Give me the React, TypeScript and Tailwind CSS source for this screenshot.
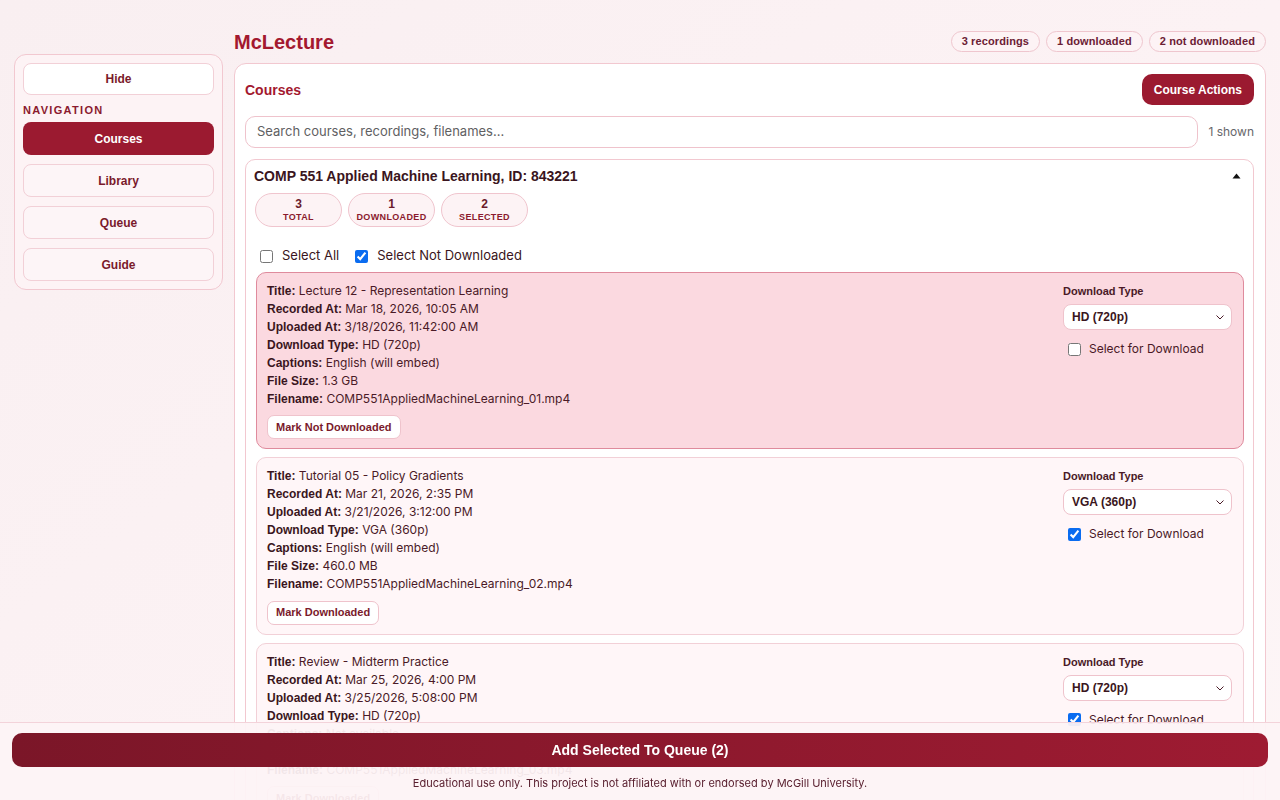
import React from "react";

const body = { fontFamily: 'Inter, "Noto Sans", sans-serif' };
const head = { fontFamily: '"Liberation Sans", Arial, sans-serif' };

type Rec = {
  title: string;
  recorded: string;
  uploaded: string;
  type: string;
  captions: string;
  size: string;
  filename: string;
  downloaded: boolean;
  selected: boolean;
};

const recs: Rec[] = [
  {
    title: "Lecture 12 - Representation Learning",
    recorded: "Mar 18, 2026, 10:05 AM",
    uploaded: "3/18/2026, 11:42:00 AM",
    type: "HD (720p)",
    captions: "English (will embed)",
    size: "1.3 GB",
    filename: "COMP551AppliedMachineLearning_01.mp4",
    downloaded: true,
    selected: false,
  },
  {
    title: "Tutorial 05 - Policy Gradients",
    recorded: "Mar 21, 2026, 2:35 PM",
    uploaded: "3/21/2026, 3:12:00 PM",
    type: "VGA (360p)",
    captions: "English (will embed)",
    size: "460.0 MB",
    filename: "COMP551AppliedMachineLearning_02.mp4",
    downloaded: false,
    selected: true,
  },
  {
    title: "Review - Midterm Practice",
    recorded: "Mar 25, 2026, 4:00 PM",
    uploaded: "3/25/2026, 5:08:00 PM",
    type: "HD (720p)",
    captions: "Not available",
    size: "1.1 GB",
    filename: "COMP551AppliedMachineLearning_03.mp4",
    downloaded: false,
    selected: true,
  },
];

function Line({ label, value }: { label: string; value: string }) {
  return (
    <div className="h-[18px] leading-[18px] text-[12px] text-[#4a1a27] whitespace-nowrap">
      <span className="font-bold text-[#3a1520]" style={head}>
        {label}:
      </span>{" "}
      <span style={body}>{value}</span>
    </div>
  );
}

function RecordingCard({ r }: { r: Rec }) {
  const cls = r.downloaded
    ? "bg-[#fbd9e0] border-[#df8b9d]"
    : "bg-[#fff6f8] border-[#f2d0d7]";
  return (
    <div className={`flex rounded-[10px] border ${cls} pl-[10px] pr-[11px] pt-[9px] pb-[9px]`}>
      <div className="flex-1 flex flex-col">
        <Line label="Title" value={r.title} />
        <Line label="Recorded At" value={r.recorded} />
        <Line label="Uploaded At" value={r.uploaded} />
        <Line label="Download Type" value={r.type} />
        <Line label="Captions" value={r.captions} />
        <Line label="File Size" value={r.size} />
        <Line label="Filename" value={r.filename} />
        <div className="mt-[5px]">
          <button
            className="h-[24px] px-[8px] rounded-[7px] border border-[#efc3cc] bg-white text-[11px] font-bold text-[#7a1a2b]"
            style={head}
          >
            {r.downloaded ? "Mark Not Downloaded" : "Mark Downloaded"}
          </button>
        </div>
      </div>
      <div className="w-[169px] flex flex-col">
        <div className="h-[18px] leading-[18px] text-[11px] font-bold text-[#4a1a27]" style={head}>
          Download Type
        </div>
        <div className="relative mt-[4px] h-[26px] rounded-[8px] border border-[#efc3cc] bg-white flex items-center pl-[8px]">
          <span className="text-[12px] font-bold text-[#3a1520]" style={head}>
            {r.type}
          </span>
          <svg
            className="absolute right-[7px] top-[10px]"
            width="8"
            height="5"
            viewBox="0 0 8 5"
            fill="none"
            stroke="#4a1a27"
            strokeWidth="1"
          >
            <path d="M0.5 0.5L4 4L7.5 0.5" />
          </svg>
        </div>
        <label className="mt-[10px] flex items-center gap-[8px] pl-[5px] text-[12px] text-[#4a1a27]" style={body}>
          <input type="checkbox" defaultChecked={r.selected} className="w-[13px] h-[13px] m-0 accent-[#0a6cf0]" />
          Select for Download
        </label>
      </div>
    </div>
  );
}

function Pill({ n, label }: { n: string; label: string }) {
  return (
    <div className="w-[87px] h-[34px] rounded-full border border-[#f0c5ce] bg-[#fdf3f5] flex flex-col items-center justify-center">
      <div className="text-[12px] leading-[14px] font-bold text-[#6b1a2b]" style={head}>
        {n}
      </div>
      <div className="text-[9px] leading-[12px] font-bold tracking-[0.04em] text-[#8b1a2e]" style={head}>
        {label}
      </div>
    </div>
  );
}

function NavBtn({ label, active }: { label: string; active?: boolean }) {
  return (
    <button
      className={
        active
          ? "h-[33px] w-full rounded-[8px] bg-[#9b1a30] text-white text-[12px] font-bold"
          : "h-[33px] w-full rounded-[8px] border border-[#f2d0d7] bg-[#fdf5f7] text-[#7a1a2b] text-[12px] font-bold"
      }
      style={head}
    >
      {label}
    </button>
  );
}

function Badge({ label }: { label: string }) {
  return (
    <div
      className="h-[21px] px-[10px] rounded-full border border-[#efc6ce] bg-[#fdf3f5] flex items-center text-[11px] font-bold text-[#6b2034] tracking-[0.01em]"
      style={head}
    >
      {label}
    </div>
  );
}

export default function App() {
  return (
    <div
      className="min-h-screen w-full bg-gradient-to-br from-[#f9eff1] via-[#fcf2f4] to-[#fdf6f7] pb-[100px]"
      style={body}
    >
      <div className="flex items-start px-[14px] pt-[28px] gap-[11px]">
        {/* Sidebar */}
        <aside className="mt-[26px] w-[209px] shrink-0 rounded-[12px] border border-[#f2c8d0] bg-[#fdf3f5] p-[8px] flex flex-col">
          <button
            className="h-[32px] w-full rounded-[8px] border border-[#f2d0d7] bg-white text-[#7a1a2b] text-[12px] font-bold"
            style={head}
          >
            Hide
          </button>
          <div
            className="mt-[9px] mb-[6px] text-[11px] leading-[12px] font-bold tracking-[0.12em] text-[#8b1a2e]"
            style={head}
          >
            NAVIGATION
          </div>
          <div className="flex flex-col gap-[9px]">
            <NavBtn label="Courses" active />
            <NavBtn label="Library" />
            <NavBtn label="Queue" />
            <NavBtn label="Guide" />
          </div>
        </aside>

        {/* Main */}
        <main className="flex-1 min-w-0 flex flex-col">
          <div className="h-[28px] flex items-center justify-between">
            <h1 className="text-[20px] font-bold text-[#a3182f] leading-[28px]" style={head}>
              McLecture
            </h1>
            <div className="flex items-center gap-[6px] -mt-[2px]">
              <Badge label="3 recordings" />
              <Badge label="1 downloaded" />
              <Badge label="2 not downloaded" />
            </div>
          </div>

          <section className="mt-[7px] rounded-[12px] border border-[#f2c8d0] bg-white pt-[10px] pl-[10px] pr-[11px] pb-[12px] flex flex-col">
            <div className="flex items-center justify-between h-[31px]">
              <h2 className="text-[14px] font-bold text-[#a3182f] mt-[1px]" style={head}>
                Courses
              </h2>
              <button
                className="h-[31px] px-[12px] rounded-[10px] bg-[#9b1a30] text-white text-[12px] font-bold"
                style={head}
              >
                Course Actions
              </button>
            </div>

            <div className="mt-[11px] flex items-center gap-[10px]">
              <div className="flex-1 h-[32px] rounded-[10px] border border-[#efc3cc] bg-white flex items-center px-[11px]">
                <span className="text-[13px] text-[#5f5f63]">Search courses, recordings, filenames...</span>
              </div>
              <span className="text-[12px] text-[#66666a] whitespace-nowrap">1 shown</span>
            </div>

            <div className="mt-[11px] rounded-[10px] border border-[#f2c8d0] bg-white pt-[6px] pl-[8px] pr-[9px] pb-[10px] flex flex-col">
              <div className="flex items-center justify-between h-[20px]">
                <div className="text-[14px] font-bold text-[#3a1520]" style={head}>
                  COMP 551 Applied Machine Learning, ID: 843221
                </div>
                <svg width="9" height="6" viewBox="0 0 9 6" className="mr-[3px]">
                  <path d="M4.5 0.5L8.5 5.5H0.5z" fill="#111" />
                </svg>
              </div>
              <div className="mt-[7px] flex gap-[6px] pl-[1px]">
                <Pill n="3" label="TOTAL" />
                <Pill n="1" label="DOWNLOADED" />
                <Pill n="2" label="SELECTED" />
              </div>
              <div className="mt-[18px] h-[22px] flex items-center gap-[16px] pl-[6px] text-[13px] text-[#3a1520]">
                <label className="flex items-center gap-[9px]">
                  <input type="checkbox" className="w-[13px] h-[13px] m-0 accent-[#0a6cf0]" />
                  Select All
                </label>
                <label className="flex items-center gap-[9px]">
                  <input type="checkbox" defaultChecked className="w-[13px] h-[13px] m-0 accent-[#0a6cf0]" />
                  Select Not Downloaded
                </label>
              </div>
              <div className="mt-[5px] flex flex-col gap-[8px] pl-[2px]">
                {recs.map((r) => (
                  <RecordingCard key={r.filename} r={r} />
                ))}
              </div>
            </div>
          </section>
        </main>
      </div>

      {/* Fixed bottom bar */}
      <div className="fixed left-0 right-0 bottom-0 h-[78px] border-t border-[#f3d3da] bg-[#fdf3f5]/[0.94] px-[12px] pt-[10px] flex flex-col items-center">
        <button
          className="w-full h-[34px] rounded-[10px] bg-gradient-to-r from-[#7b1628] to-[#9e1b32] text-white text-[14px] font-bold"
          style={head}
        >
          Add Selected To Queue (2)
        </button>
        <div className="mt-[8px] text-[11px] text-[#5a2030]">
          Educational use only. This project is not affiliated with or endorsed by McGill University.
        </div>
      </div>
    </div>
  );
}
